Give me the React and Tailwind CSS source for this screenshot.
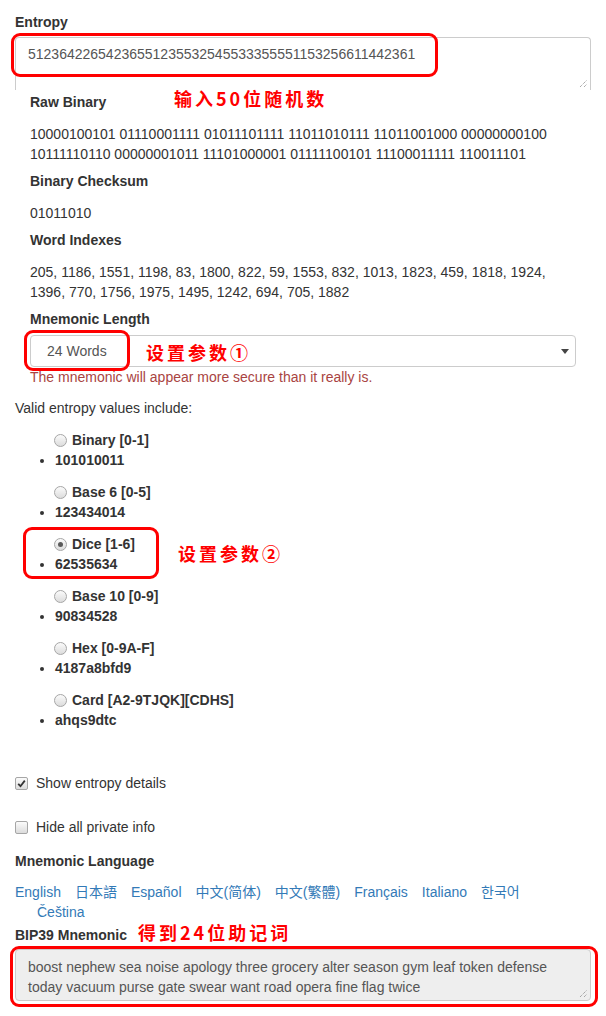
import React from 'react';

const FONT = "font-['Liberation_Sans','Noto_Sans_CJK_SC','Noto_Sans_CJK_KR',Arial,sans-serif]";
const NOTE = "font-['Noto_Sans_CJK_SC',sans-serif]";

const Label = ({ children, className = '' }) => (
    <div className={`font-bold h-5 ${className}`}>{children}</div>
);

// dotted resize handle, bottom-right of a textarea
const Grip = () => (
    <svg className="absolute right-[2px] bottom-[2px]" width="9" height="9" viewBox="0 0 9 9">
        <path d="M1 8 L8 1 M5 8 L8 5" stroke="#888" strokeWidth="1" strokeDasharray="1 1" />
    </svg>
);

const Radio = ({ checked }) => (
    <span className="relative inline-flex items-center justify-center w-[13px] h-[13px] rounded-full border border-[#a6a6a6] bg-gradient-to-b from-[#fbfbfb] to-[#dcdcdc] shrink-0">
        {checked && <span className="w-[5px] h-[5px] rounded-full bg-[#5a5a5a]" />}
    </span>
);

const Checkbox = ({ checked }) => (
    <span className="inline-flex items-center justify-center w-[13px] h-[13px] rounded-[2px] border border-[#a6a6a6] bg-gradient-to-b from-[#fbfbfb] to-[#dcdcdc] shrink-0">
        {checked && (
            <svg width="9" height="9" viewBox="0 0 9 9">
                <path d="M1.2 4.8 L3.5 7.2 L7.8 1.6" fill="none" stroke="#333" strokeWidth="1.8" />
            </svg>
        )}
    </span>
);

const entropyTypes = [
    { name: 'Binary [0-1]', sample: '101010011' },
    { name: 'Base 6 [0-5]', sample: '123434014' },
    { name: 'Dice [1-6]', sample: '62535634', checked: true },
    { name: 'Base 10 [0-9]', sample: '90834528' },
    { name: 'Hex [0-9A-F]', sample: '4187a8bfd9' },
    { name: 'Card [A2-9TJQK][CDHS]', sample: 'ahqs9dtc' },
];

const languages = ['English', '日本語', 'Español', '中文(简体)', '中文(繁體)', 'Français', 'Italiano', '한국어'];

// red annotation frames drawn over the screenshot
const RedBox = ({ className }) => (
    <div className={`absolute border-[3px] border-[#ff0000] rounded-[9px] ${className}`} />
);

const Note = ({ children, className }) => (
    <div className={`absolute ${NOTE} font-bold text-[18px] leading-6 tracking-[3px] text-[#ff0000] whitespace-nowrap ${className}`}>
        {children}
    </div>
);

const App = () => {
    return (
        <div className={`relative w-[606px] h-[1016px] overflow-hidden bg-white text-[14px] leading-5 text-[#333] ${FONT}`}>
            <div className="flex flex-col px-[15px] pt-[12px]">
                <Label>Entropy</Label>
                <div className="relative mt-[5px] h-[53px] border border-b-0 border-[#ccc] rounded-t-[4px] px-3 pt-[6px] text-[#555]">
                    51236422654236551235532545533355551153256611442361
                    <Grip />
                </div>

                {/* entropy details */}
                <div className="flex flex-col px-[15px] pt-[2px]">
                    <Label>Raw Binary</Label>
                    <p className="mt-[12px] pb-[7px]">
                        10000100101 01110001111 01011101111 11011010111 11011001000 00000000100 10111110110 00000001011 11101000001 01111100101 11100011111 110011101
                    </p>
                    <Label>Binary Checksum</Label>
                    <p className="mt-[12px] pb-[7px]">01011010</p>
                    <Label>Word Indexes</Label>
                    <p className="mt-[12px] pb-[7px]">
                        205, 1186, 1551, 1198, 83, 1800, 822, 59, 1553, 832, 1013, 1823, 459, 1818, 1924, 1396, 770, 1756, 1975, 1495, 1242, 694, 705, 1882
                    </p>
                    <Label>Mnemonic Length</Label>
                    <div className="relative mt-[6px] h-[32px] border border-[#ccc] rounded-[4px] flex items-center justify-between pl-[16px] pr-[6px] text-[#555]">
                        <span>24 Words</span>
                        <svg width="8" height="5" viewBox="0 0 8 5">
                            <path d="M0 0 H8 L4 5 Z" fill="#444" />
                        </svg>
                    </div>
                    <div className="text-[#a94442]">The mnemonic will appear more secure than it really is.</div>
                </div>

                <div className="mt-[11px]">Valid entropy values include:</div>
                <div className="mt-[12px] flex flex-col gap-[12px]">
                    {entropyTypes.map(t => (
                        <div key={t.name} className="flex flex-col font-bold">
                            <div className="flex items-center gap-[5px] h-5 pl-[39px]">
                                <Radio checked={t.checked} />
                                <span>{t.name}</span>
                            </div>
                            <ul className="list-disc pl-[40px]">
                                <li>{t.sample}</li>
                            </ul>
                        </div>
                    ))}
                </div>

                <div className="mt-[43px] flex flex-col gap-[24px]">
                    <div className="flex items-center gap-[8px] h-5">
                        <Checkbox checked />
                        <span>Show entropy details</span>
                    </div>
                    <div className="flex items-center gap-[8px] h-5">
                        <Checkbox />
                        <span>Hide all private info</span>
                    </div>
                </div>

                <Label className="mt-[14px]">Mnemonic Language</Label>
                <div className="mt-[11px] flex gap-x-[14px] text-[#337ab7]">
                    {languages.map(l => <span key={l}>{l}</span>)}
                </div>
                <div className="pl-[22px] text-[#337ab7]">Čeština</div>

                <Label className="mt-[3px]">BIP39 Mnemonic</Label>
                <div className="relative mt-[4px] h-[52px] border border-[#ccc] rounded-[4px] bg-[#eee] px-3 pt-[7px] text-[#555]">
                    boost nephew sea noise apology three grocery alter season gym leaf token defense today vacuum purse gate swear want road opera fine flag twice
                    <Grip />
                </div>
            </div>

            {/* annotations */}
            <RedBox className="left-[11px] top-[33px] w-[427px] h-[44px]" />
            <RedBox className="left-[24px] top-[330px] w-[106px] h-[41px]" />
            <RedBox className="left-[23px] top-[527px] w-[136px] h-[52px]" />
            <RedBox className="left-[10px] top-[946px] w-[588px] h-[61px]" />

            <Note className="left-[174px] top-[86px]">输入50位随机数</Note>
            <Note className="left-[146px] top-[340px]">设置参数①</Note>
            <Note className="left-[178px] top-[541px]">设置参数②</Note>
            <Note className="left-[138px] top-[920px]">得到24位助记词</Note>
        </div>
    );
};

export default App;
